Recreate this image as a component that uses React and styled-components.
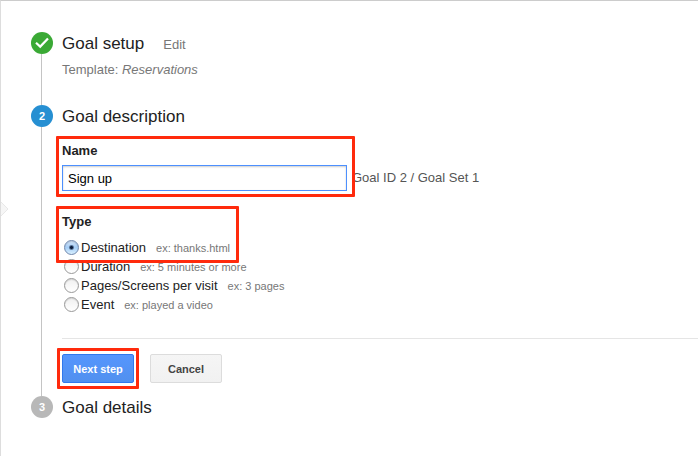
import React, { useState } from 'react'
import styled, { createGlobalStyle, css } from 'styled-components'

const GlobalStyle = createGlobalStyle`
  * {
    box-sizing: border-box;
  }
  body {
    margin: 0;
    background: #fff;
    color: #222;
    font-family: "Liberation Sans", Arial, sans-serif;
    font-size: 13px;
    line-height: 20px;
  }
`

const Page = styled.main`
  position: relative;
  min-height: 100vh;
  padding: 31px 0 0 30px;
  border-top: 1px solid #ccc;
  border-left: 1px solid #ddd;
  overflow: hidden;
`

const Notch = styled.svg`
  position: absolute;
  top: 199px;
  left: -1px;
`

const Steps = styled.ol`
  list-style: none;
  margin: 0;
  padding: 0;
`

const StepItem = styled.li`
  display: flex;
  gap: 9px;
`

const Rail = styled.div`
  display: flex;
  flex-direction: column;
  align-items: center;
  width: 22px;
  flex: none;
`

const Line = styled.span`
  flex: 1;
  width: 1px;
  margin-right: 1px;
  background: #c4c4c4;
`

const markerColors = {
  done: '#3aa935',
  current: '#268fd2',
  pending: '#b8b8b8',
}

const Marker = styled.span`
  display: flex;
  align-items: center;
  justify-content: center;
  width: 22px;
  height: 22px;
  border-radius: 50%;
  background: ${(props) => markerColors[props.$status]};
  color: #fff;
  font-size: 11px;
  font-weight: bold;
`

const StepBody = styled.section`
  flex: 1;
  min-width: 0;
  padding-bottom: ${(props) => props.$space}px;
`

const StepHeader = styled.header`
  display: flex;
  align-items: baseline;
  gap: 19px;
`

const StepTitle = styled.h2`
  margin: 0;
  font-size: 17px;
  font-weight: normal;
  line-height: 24px;
`

const EditLink = styled.a`
  color: #777;
  text-decoration: none;
`

const Template = styled.p`
  margin: 4px 0 0;
  color: #777;
`

const highlight = css`
  position: relative;
  &::after {
    content: "";
    position: absolute;
    inset: ${(props) => props.$inset};
    border: 3px solid #ff2a0c;
    border-radius: 1px;
    pointer-events: none;
  }
`

const NameRow = styled.div`
  display: flex;
  align-items: flex-end;
  gap: 5px;
  margin-top: 12px;
`

const NameField = styled.div`
  ${highlight}
  display: flex;
  flex-direction: column;
  gap: 4px;
  flex: 0 1 285px;
`

const Label = styled.label`
  font-weight: bold;
`

const TextInput = styled.input`
  width: 100%;
  height: 26px;
  padding: 0 5px;
  border: 1px solid #4d90fe;
  border-radius: 0;
  outline: none;
  box-shadow: inset 0 1px 2px rgba(0, 0, 0, 0.2);
  color: #000;
  font: inherit;
`

const GoalId = styled.span`
  padding-bottom: 3px;
  color: #555;
  white-space: nowrap;
`

const TypeGroup = styled.div`
  display: flex;
  flex-direction: column;
  align-items: flex-start;
  margin-top: 21px;
`

const TypeHighlight = styled.div`
  ${highlight}
`

const TypeHeading = styled.h3`
  margin: 0 0 6px;
  font-size: 13px;
  line-height: 20px;
`

const RadioLabel = styled.label`
  display: flex;
  align-items: center;
  gap: 2px;
  height: 19px;
  padding-left: 2px;
`

const Radio = styled.input`
  appearance: none;
  width: 15px;
  height: 15px;
  flex: none;
  margin: 0;
  border: 1px solid #999;
  border-radius: 50%;
  background: linear-gradient(#f0f0f0, #fff);
  box-shadow: inset 0 1px 1px rgba(0, 0, 0, 0.12);
  &:checked {
    border-color: #6f87ad;
    background: radial-gradient(circle, #0b1c3c 0 1px, transparent 3px),
      linear-gradient(#d3e4f8, #a5cdf6 50%, #d8f0ff);
  }
`

const RadioText = styled.span`
  display: flex;
  align-items: baseline;
  gap: 10px;
`

const Example = styled.span`
  color: #777;
  font-size: 11px;
`

const Divider = styled.hr`
  width: 100%;
  height: 1px;
  margin: 24px 0 15px;
  border: 0;
  background: #e5e5e5;
`

const Actions = styled.div`
  display: flex;
  gap: 16px;
`

const ActionSlot = styled.div`
  ${(props) => props.$inset && highlight}
`

const Button = styled.button`
  display: block;
  min-width: 72px;
  height: 29px;
  padding: 0 8px;
  border: 1px solid ${(props) => (props.$primary ? '#3079ed' : '#dcdcdc')};
  border-radius: 2px;
  background: ${(props) =>
    props.$primary
      ? 'linear-gradient(#5596fd, #5190ef)'
      : 'linear-gradient(#f5f5f5, #f1f1f1)'};
  color: ${(props) => (props.$primary ? '#fff' : '#444')};
  font-family: inherit;
  font-size: 11px;
  font-weight: bold;
`

const goalTypes = [
  { id: 'destination', name: 'Destination', example: 'ex: thanks.html' },
  { id: 'duration', name: 'Duration', example: 'ex: 5 minutes or more' },
  { id: 'pages', name: 'Pages/Screens per visit', example: 'ex: 3 pages' },
  { id: 'event', name: 'Event', example: 'ex: played a video' },
]

const CheckMark = () => (
  <svg width="16" height="14" viewBox="0 0 16 14" aria-hidden="true">
    <path d="M2 6.8 L6.2 10.6 L14 2.4" fill="none" stroke="#fff" strokeWidth="2.2" />
  </svg>
)

const Step = ({ status, marker, title, action, space = 0, last, children }) => (
  <StepItem>
    <Rail>
      <Marker $status={status}>{marker}</Marker>
      {!last && <Line />}
    </Rail>
    <StepBody $space={space}>
      <StepHeader>
        <StepTitle>{title}</StepTitle>
        {action}
      </StepHeader>
      {children}
    </StepBody>
  </StepItem>
)

const TypeOption = ({ type, checked, onSelect }) => (
  <RadioLabel>
    <Radio
      type="radio"
      name="goal-type"
      value={type.id}
      checked={checked}
      onChange={() => onSelect(type.id)}
    />
    <RadioText>
      {type.name}
      <Example>{type.example}</Example>
    </RadioText>
  </RadioLabel>
)

const App = () => {
  const [name, setName] = useState('Sign up')
  const [selected, setSelected] = useState('destination')
  const [firstType, ...otherTypes] = goalTypes

  return (
    <Page>
      <GlobalStyle />
      <Notch width="9" height="18" viewBox="0 0 9 18" aria-hidden="true">
        <path d="M0 1 L8 9 L0 17 Z" fill="#f6f6f6" />
        <path d="M0 1 L8 9 L0 17" fill="none" stroke="#e8e8e8" />
      </Notch>
      <Steps>
        <Step
          status="done"
          marker={<CheckMark />}
          title="Goal setup"
          action={<EditLink href="#setup">Edit</EditLink>}
          space={25}
        >
          <Template>
            Template: <em>Reservations</em>
          </Template>
        </Step>

        <Step status="current" marker="2" title="Goal description" space={13}>
          <NameRow>
            <NameField $inset="-5px -8px -6px -6px">
              <Label htmlFor="goal-name">Name</Label>
              <TextInput
                id="goal-name"
                type="text"
                value={name}
                onChange={(e) => setName(e.target.value)}
              />
            </NameField>
            <GoalId>Goal ID 2 / Goal Set 1</GoalId>
          </NameRow>

          <TypeGroup role="radiogroup" aria-labelledby="type-heading">
            <TypeHighlight $inset="-6px -9px -6px -6px">
              <TypeHeading id="type-heading">Type</TypeHeading>
              <TypeOption
                type={firstType}
                checked={selected === firstType.id}
                onSelect={setSelected}
              />
            </TypeHighlight>
            {otherTypes.map((type) => (
              <TypeOption
                key={type.id}
                type={type}
                checked={selected === type.id}
                onSelect={setSelected}
              />
            ))}
          </TypeGroup>

          <Divider />
          <Actions>
            <ActionSlot $inset="-6px -5px">
              <Button type="button" $primary>
                Next step
              </Button>
            </ActionSlot>
            <ActionSlot>
              <Button type="button">Cancel</Button>
            </ActionSlot>
          </Actions>
        </Step>

        <Step status="pending" marker="3" title="Goal details" last />
      </Steps>
    </Page>
  )
}

export default App
